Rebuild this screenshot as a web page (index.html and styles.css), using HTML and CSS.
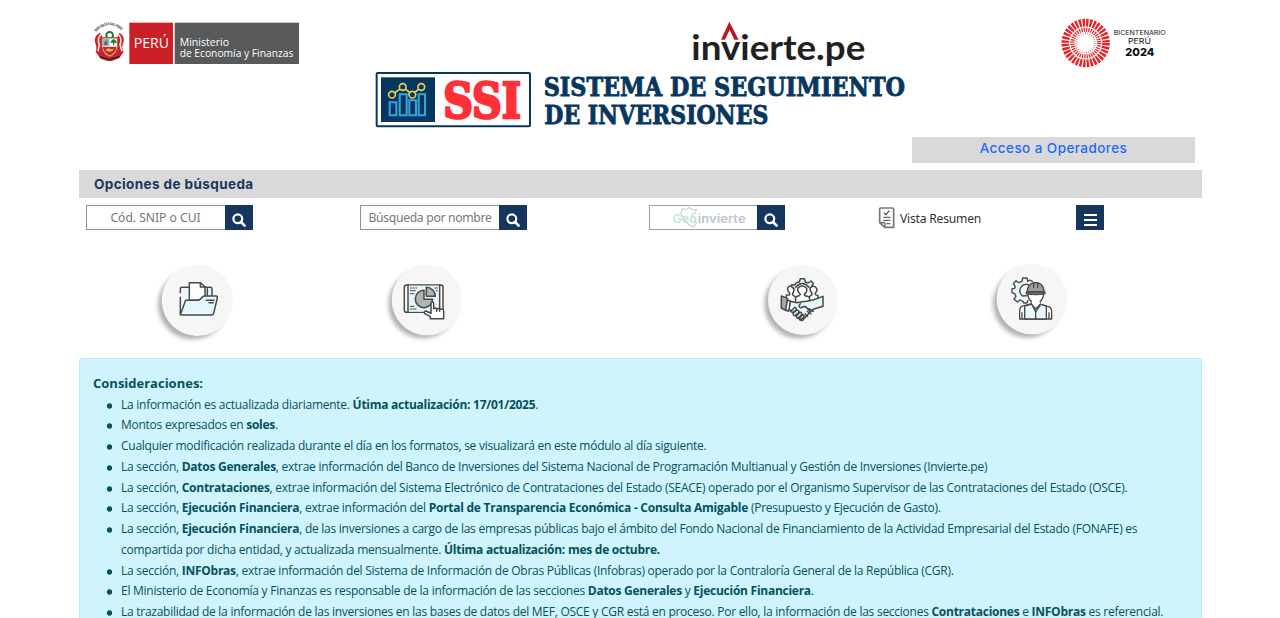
FILE: index.html
```html
<!DOCTYPE html>
<html lang="es">
<head>
<meta charset="utf-8">
<title>Sistema de Seguimiento de Inversiones</title>
<link rel="stylesheet" href="styles.css">
</head>
<body>
<svg class="defs" width="0" height="0">
  <defs>
    <filter id="soft" x="-30%" y="-30%" width="160%" height="160%"><feGaussianBlur stdDeviation="7"/></filter>
    <symbol id="lens" viewBox="0 0 14 14"><circle cx="5.8" cy="5.8" r="4.4" fill="none" stroke="#fff" stroke-width="2.2"/><path d="M9 9l3.6 3.6" stroke="#fff" stroke-width="2.6" stroke-linecap="round"/></symbol>
  </defs>
</svg>
<div class="page">
  <header class="brands">
    <svg class="mef" viewBox="0 0 720 174">
      <path id="arc" d="M48 66Q88 24 130 66" fill="none"/>
      <text class="noto" font-size="11" font-weight="700" fill="#555"><textPath href="#arc" textLength="88">REPÚBLICA DEL PERÚ</textPath></text>
      <path d="M60 68Q38 80 46 100Q52 112 47 126L62 146L82 153H96L118 144L131 126Q123 112 130 98Q136 78 118 68L112 82H68Z" fill="#c9242c"/>
      <path d="M64 72Q50 86 58 104L54 124M114 72Q128 86 120 104L126 124" fill="none" stroke="#f2dfd4" stroke-width="5"/>
      <circle cx="89" cy="76" r="10" fill="none" stroke="#24733d" stroke-width="6"/>
      <path d="M66 84H112V112Q110 132 89 140Q68 132 66 112Z" fill="#fff" stroke="#a36b2c" stroke-width="3"/>
      <path d="M68 86H88V108H68Z" fill="#71bfd6"/><path d="M73 105V95L82 91V105" fill="#a45628"/>
      <path d="M101 106V98M94 96Q101 84 108 96Z" stroke="#267542" stroke-width="4" fill="#267542"/>
      <path d="M68 110H110Q108 129 89 137Q70 129 68 110" fill="#c9242c"/><path d="M76 121Q91 132 103 116L94 118L84 115Z" fill="#e7b74b"/>
      <path d="M60 140L89 149L118 140" fill="none" stroke="#222" stroke-width="4"/>
      <rect x="148" y="38" width="131" height="124" fill="#cb2027"/>
      <rect x="284" y="38" width="373" height="124" fill="#58595b"/>
      <text class="open" x="161" y="114" font-size="44" fill="#fff" textLength="106" lengthAdjust="spacingAndGlyphs">PERÚ</text>
      <text class="open" x="299" y="109" font-size="33" fill="#fff" textLength="148" lengthAdjust="spacingAndGlyphs">Ministerio</text>
      <text class="open" x="299" y="142" font-size="33" fill="#fff" textLength="341" lengthAdjust="spacingAndGlyphs">de Economía y Finanzas</text>
    </svg>
    <svg class="invierte" viewBox="0 0 660 174">
      <text class="lato" x="64" y="149" font-size="104" font-weight="700" fill="#231f20" textLength="522" lengthAdjust="spacingAndGlyphs">invierte.pe</text>
      <path d="M153 89L178 35L206 89H193L179 59L165 89Z" fill="#be1622"/>
    </svg>
    <svg class="bicentenario" viewBox="0 0 480 174">
      <g fill="none" stroke="#e52329">
        <circle cx="137" cy="99" r="61" stroke-width="23" pathLength="324" stroke-dasharray="6 3"/>
        <circle cx="137" cy="99" r="40" stroke-width="12" pathLength="324" stroke-dasharray="5 4"/>
        <circle cx="136" cy="99" r="29" stroke-width="5" pathLength="324" stroke-dasharray="5 7" opacity=".6"/>
      </g>
      <g class="inter" fill="#111">
        <text x="221" y="75" font-size="18" textLength="156" lengthAdjust="spacingAndGlyphs">BICENTENARIO</text>
        <text x="264" y="101" font-size="23" textLength="69" lengthAdjust="spacingAndGlyphs">PERÚ</text>
        <text x="256" y="137" font-size="32" font-weight="800" textLength="87" lengthAdjust="spacingAndGlyphs">2024</text>
      </g>
    </svg>
  </header>

  <div class="title">
    <svg class="ssi" viewBox="0 12 1665 186">
      <rect x="35" y="27" width="460" height="160" rx="3" fill="#fff" stroke="#07365f" stroke-width="6"/>
      <rect x="48" y="40" width="162" height="134" fill="#07365f"/>
      <g fill="none" stroke="#36a5de" stroke-width="6"><path d="M74 154V115H94V154ZM104 154V91H125V154ZM133 154V109H153V154ZM161 154V91H180V154Z"/></g>
      <path d="M81 92L113 69L142 91L169 69" fill="none" stroke="#e9cf57" stroke-width="5"/>
      <g fill="#07365f" stroke="#e9cf57" stroke-width="5"><circle cx="81" cy="92" r="10"/><circle cx="113" cy="69" r="10"/><circle cx="142" cy="92" r="10"/><circle cx="169" cy="69" r="10"/></g>
      <g class="slab" font-weight="700">
        <text x="235" y="161" font-size="148" fill="#ff3038" stroke="#ff3038" stroke-width="8" stroke-linejoin="round" textLength="233" lengthAdjust="spacingAndGlyphs">SSI</text>
        <g fill="#07365f" stroke="#07365f" stroke-width="2.5">
          <text x="536" y="97" font-size="80" textLength="1084" lengthAdjust="spacingAndGlyphs">SISTEMA DE SEGUIMIENTO</text>
          <text x="538" y="179" font-size="80" textLength="672" lengthAdjust="spacingAndGlyphs">DE INVERSIONES</text>
        </g>
      </g>
    </svg>
  </div>

  <div class="access"><a>Acceso a Operadores</a></div>
  <h2 class="options">Opciones de búsqueda</h2>

  <div class="search">
    <div class="field code"><span>Cód. SNIP o CUI</span><button><svg><use href="#lens"/></svg></button></div>
    <div class="field name"><span>Búsqueda por nombre</span><button><svg><use href="#lens"/></svg></button></div>
    <div class="field geo">
      <svg class="geologo" viewBox="0 0 318 72">
        <path d="M93 7L104 12L114 5L125 12L137 11L133 22L122 28L133 39L136 54L127 66L112 58L96 40L88 24Z" fill="none" stroke="#cad5dc" stroke-width="4"/>
        <g class="inter" font-size="36" font-weight="600"><text x="62" y="53" fill="#bfe8d7" textLength="76" lengthAdjust="spacingAndGlyphs">Geo</text><text x="141" y="53" fill="#bcc6d2" textLength="150" lengthAdjust="spacingAndGlyphs">invierte</text></g>
      </svg>
      <button><svg><use href="#lens"/></svg></button>
    </div>
    <div class="summary">
      <svg viewBox="0 0 51 66"><path d="M8 3H43Q47 3 47 7V61H20L5 47V7Q5 3 8 3ZM5 47H18Q21 47 21 60" fill="#fff" stroke="#777" stroke-width="5"/><path d="M18 17L24 23L34 11" fill="none" stroke="#555" stroke-width="4"/><path d="M16 31H37M16 40H37M25 50H37" stroke="#666" stroke-width="4"/></svg>
      <span>Vista Resumen</span>
    </div>
    <button class="menu"><i></i><i></i><i></i></button>
  </div>

  <nav class="tiles">
    <svg viewBox="0 0 330 300">
      <circle cx="158" cy="164" r="104" fill="#888" opacity=".65" filter="url(#soft)"/><circle cx="172" cy="151" r="107" fill="#f6f6f6"/>
      <g fill="#e5f6fd" stroke="#454b4f" stroke-width="4.5" stroke-linejoin="round" stroke-linecap="round">
        <path d="M121 128V117Q121 112 126 112H211Q216 112 216 117V145M121 142V190"/><path d="M148 151V98H181L195 111V145L178 151Z" fill="#fff"/><path d="M181 98V111H195M202 116V137" fill="none"/>
        <path d="M121 194L137 151H171Q180 151 187 141Q190 138 196 138H228Q233 138 232 144L221 190Q220 195 214 195H125Q120 196 121 190Z"/><path d="M199 151H222M207 158H220" fill="none"/>
      </g>
    </svg>
    <svg viewBox="0 0 330 300">
      <circle cx="158" cy="162" r="103" fill="#888" opacity=".65" filter="url(#soft)"/><circle cx="171" cy="150" r="106" fill="#f6f6f6"/>
      <g fill="none" stroke="#484848" stroke-width="4.5" stroke-linejoin="round" stroke-linecap="round">
        <rect x="103" y="105" width="116" height="82" rx="7" fill="#fff"/><path d="M116 107H207V185H116Z" fill="#e5f6fd" stroke="none"/><path d="M114 105V187M209 105V176"/>
        <path d="M162 121A26 26 0 1 0 188 148H162Z" fill="#b3b3b3"/><path d="M169 112A27 27 0 0 1 196 139H169Z" fill="#b3b3b3"/>
        <path d="M121 114H125M129 114H133M137 114H140M121 122H136M121 131H132M121 169H132M121 177H125M129 177H138M195 114H202M198 122H202" stroke-width="3"/>
        <path d="M183 190V160Q183 156 187 156Q191 156 191 160V176Q196 172 200 177Q205 173 209 178Q220 174 221 184V206H181V199L164 191Q160 184 168 183Z" fill="#fff"/><path d="M200 177V184M209 178V184"/>
      </g>
    </svg>
    <svg viewBox="0 0 330 300">
      <circle cx="146" cy="162" r="103" fill="#888" opacity=".65" filter="url(#soft)"/><circle cx="159" cy="150" r="105" fill="#f6f6f6"/>
      <g fill="#fff" stroke="#484848" stroke-width="4.5" stroke-linejoin="round" stroke-linecap="round">
        <path d="M122 119L125 104L134 105L139 98L148 96L151 86H163L166 96L174 99L183 93L190 101L185 109L190 119" fill="#e5f6fd"/><path d="M137 112Q156 89 177 112" fill="none"/>
        <path d="M109 145V136L119 134V129Q111 121 113 115Q117 105 126 111Q135 116 131 124L128 130V135L138 142M177 141L186 134V129Q178 121 181 114Q190 104 199 114Q204 121 196 129V134L204 137V144"/>
        <path d="M137 149Q134 139 148 137L151 133Q140 123 144 114Q154 103 167 112Q176 121 163 133L166 138Q179 137 179 149V161H137Z"/>
        <path d="M120 154L141 158L155 155Q169 155 189 150L219 139V169L190 178L178 188L158 211Q150 213 147 206L117 177Z" fill="#e5f6fd"/>
        <path d="M94 138L113 145L108 182L94 174Z" fill="#aaa"/><path d="M112 151L121 153L116 184L107 179Z"/>
        <path d="M130 176L135 172Q142 175 137 181L129 187Q120 187 126 180ZM139 181Q148 179 147 187L136 197Q128 197 130 189ZM150 187Q158 187 154 195L144 205Q137 203 141 196ZM158 194Q165 195 161 202L153 209Q146 207 151 202ZM165 192L173 199M172 184L183 192M177 176L190 184M151 161Q142 171 153 173L165 169L179 182" fill="#e5f6fd"/>
      </g>
    </svg>
    <svg viewBox="0 0 330 300">
      <circle cx="142" cy="160" r="103" fill="#888" opacity=".65" filter="url(#soft)"/><circle cx="156" cy="147" r="106" fill="#f6f6f6"/>
      <g fill="#e5f6fd" stroke="#484848" stroke-width="4" stroke-linejoin="round" stroke-linecap="round">
        <path d="M157 94L149 90L143 94L141 84H128L126 94L116 98L108 92L100 101L106 110L103 116H96V128L104 131L108 139L102 147L112 156L120 150L129 154L131 159H141L144 151"/><path d="M146 104Q128 100 121 115Q116 130 128 138L142 137" fill="#f6f6f6"/>
        <path d="M119 207V183Q119 168 133 167L154 162V154Q144 146 143 131H191Q190 146 180 155V163L202 169Q215 170 215 185V207Z" fill="#fff"/>
        <path d="M134 168L155 162L167 186L182 163L199 168V207H134Z"/><path d="M155 163L167 177L181 163V156H155Z" fill="#fff" stroke="none"/><path d="M154 162L167 177L181 162M167 183V207M126 188V206M207 188V206" fill="none"/>
        <path d="M142 126Q141 105 161 98H173Q192 105 192 126Z" fill="#9b9b9b"/><path d="M139 126H195V131Q167 137 139 131ZM161 99V112M173 99V112" fill="#777"/>
      </g>
    </svg>
  </nav>

  <section class="notes">
    <h3>Consideraciones:</h3>
    <ul>
      <li>La información es actualizada diariamente. <b>Útima actualización: 17/01/2025</b>.</li>
      <li>Montos expresados en <b>soles</b>.</li>
      <li>Cualquier modificación realizada durante el día en los formatos, se visualizará en este módulo al día siguiente.</li>
      <li>La sección, <b>Datos Generales</b>, extrae información del Banco de Inversiones del Sistema Nacional de Programación Multianual y Gestión de Inversiones (Invierte.pe)</li>
      <li>La sección, <b>Contrataciones</b>, extrae información del Sistema Electrónico de Contrataciones del Estado (SEACE) operado por el Organismo Supervisor de las Contrataciones del Estado (OSCE).</li>
      <li>La sección, <b>Ejecución Financiera</b>, extrae información del <b>Portal de Transparencia Económica - Consulta Amigable</b> (Presupuesto y Ejecución de Gasto).</li>
      <li>La sección, <b>Ejecución Financiera</b>, de las inversiones a cargo de las empresas públicas bajo el ámbito del Fondo Nacional de Financiamiento de la Actividad Empresarial del Estado (FONAFE) es<br>compartida por dicha entidad, y actualizada mensualmente. <b>Última actualización: mes de octubre.</b></li>
      <li>La sección, <b>INFObras</b>, extrae información del Sistema de Información de Obras Públicas (Infobras) operado por la Contraloría General de la República (CGR).</li>
      <li>El Ministerio de Economía y Finanzas es responsable de la información de las secciones <b>Datos Generales</b> y <b>Ejecución Financiera</b>.</li>
      <li>La trazabilidad de la información de las inversiones en las bases de datos del MEF, OSCE y CGR está en proceso. Por ello, la información de las secciones <b>Contrataciones</b> e <b>INFObras</b> es referencial.</li>
    </ul>
  </section>
</div>
</body>
</html>
```

FILE: styles.css
```css
* { box-sizing: border-box; }
body { margin: 0; height: 618px; overflow: hidden; background: #fff; font-family: "Noto Sans", sans-serif; }
svg { display: block; flex: none; overflow: visible; }
.defs { position: absolute; }
.noto { font-family: "Noto Sans", sans-serif; }
.open { font-family: "Open Sans", sans-serif; }
.lato { font-family: Lato, sans-serif; }
.inter { font-family: Inter, sans-serif; }
.slab { font-family: "DejaVu Serif Condensed", "DejaVu Serif", serif; }
.page { width: 1123px; height: 618px; margin-left: 79px; padding-top: 10px; }
.brands { display: flex; height: 58px; padding-left: 1px; }
.mef { width: 240px; height: 58px; }
.invierte { width: 220px; height: 58px; margin-left: 350px; }
.bicentenario { width: 160px; height: 58px; margin-left: 150px; }
.title { padding-left: 286px; height: 69px; }
.ssi { width: 555px; height: 62px; }
.access { width: 283px; height: 26px; margin: 0 7px 7px auto; background: #d9d9d9; text-align: center; font: 500 13.5px/23px Inter, sans-serif; color: #1f6bf5; letter-spacing: .43px; }
.options { height: 28px; margin: 0; padding-left: 15px; background: #d9d9d9; color: #1a365c; font: 700 13.5px/28px Inter, sans-serif; letter-spacing: .4px; }
.search { display: flex; align-items: flex-start; padding: 7px 0 0 7px; height: 52px; font-size: 12.2px; color: #777; }
.field { display: flex; width: 167px; height: 25px; }
.field span { flex: 1; border: 1px solid #929292; border-right: 0; line-height: 23px; text-align: center; white-space: nowrap; }
.code span { letter-spacing: -.05px; padding-right: 1px; }
.name { margin-left: 107px; }
.name span { letter-spacing: -.32px; }
.geo { width: 136px; margin-left: 122px; }
.geologo { width: 108px; height: 25px; border: 1px solid #8fa3b8; border-right: 0; }
button { border: 0; padding: 0; background: #17365d; width: 28px; height: 25px; flex: none; }
.field button svg { width: 14px; height: 14px; margin: 5px 0 0 7px; }
.summary { display: flex; align-items: center; gap: 5px; width: 198px; height: 25px; margin-left: 93px; padding-top: 1px; color: #333; letter-spacing: -.25px; }
.summary svg { width: 17px; height: 22px; }
.menu { display: flex; flex-direction: column; align-items: center; gap: 3px; padding-top: 9px; }
.menu i { width: 13px; height: 2px; background: #fff; }
.tiles { display: flex; padding-left: 61px; height: 108px; }
.tiles svg { width: 110px; height: 100px; }
.tiles svg:nth-child(2), .tiles svg:nth-child(4) { margin-left: 120px; }
.tiles svg:nth-child(3) { margin-left: 270px; }
.notes { height: 260px; overflow: hidden; padding: 14px 13px 0; border: 1px solid #b6effb; border-bottom: 0; border-radius: 3px 3px 0 0; background: #cff4fc; color: #055160; font-family: "Open Sans", sans-serif; font-size: 12px; line-height: 20.75px; letter-spacing: -.26px; white-space: nowrap; }
.notes h3 { margin: 0 0 .7px; font-size: 13px; line-height: 21px; letter-spacing: 0; }
.notes ul { margin: 0; padding: 0 0 0 12px; list-style: none; }
.notes li { padding-left: 16px; background: radial-gradient(circle at 4.5px 11px, currentColor 2.3px, transparent 3.1px) no-repeat; }
```
